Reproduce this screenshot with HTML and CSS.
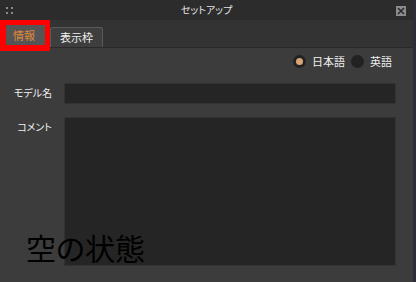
FILE: index.html
```html
<!DOCTYPE html>
<html lang="ja">
<head>
<meta charset="utf-8">
<link rel="stylesheet" href="styles.css">
</head>
<body>
<div class="window">
  <div class="titlebar">
    <span class="grip"><i></i><i></i><i></i><i></i></span>
    <span class="title">セットアップ</span>
    <span class="close"><svg width="8" height="8" viewBox="0 0 8 8"><path d="M1 1L7 7M7 1L1 7" stroke="#2a2a2a" stroke-width="1.6"/></svg></span>
  </div>
  <div class="tabbar">
    <div class="tab active">情報</div>
    <div class="tab">表示枠</div>
    <div class="highlight"></div>
  </div>
  <div class="content">
    <div class="langs">
      <span class="radio on"></span><span class="rlabel">日本語</span>
      <span class="radio"></span><span class="rlabel">英語</span>
    </div>
    <div class="row">
      <label class="lbl">モデル名</label>
      <div class="input"></div>
    </div>
    <div class="row tall">
      <label class="lbl">コメント</label>
      <div class="textarea"></div>
    </div>
    <div class="empty">空の状態</div>
  </div>
</div>
</body>
</html>
```
FILE: styles.css
```css
html, body { margin: 0; padding: 0; }
body {
  width: 416px; height: 282px; overflow: hidden;
  background: #3c3c3c;
  font-family: "Noto Sans CJK JP", "Noto Sans", sans-serif;
  font-feature-settings: "palt";
}
.window {
  width: 413px; height: 282px;
  border-right: 3px solid #2e2d35;
  background: #3c3c3c;
  display: flex; flex-direction: column;
  position: relative;
}
.titlebar {
  height: 20px; background: #2c2c2c;
  display: flex; align-items: center; justify-content: center;
  position: relative;
}
.title { color: #e6e6e6; font-size: 10px; line-height: 20px; }
.grip {
  position: absolute; left: 6px; top: 7px;
  width: 6px; height: 7px;
  display: grid; grid-template-columns: 2px 2px; column-gap: 3px; row-gap: 3px;
}
.grip i { display: block; width: 2px; height: 2px; background: #8a8a8a; }
.close {
  position: absolute; right: 7px; top: 6px;
  width: 10px; height: 10px; background: #8c8c8c;
  display: flex; align-items: center; justify-content: center;
}
.tabbar {
  height: 28px; background: #333333;
  display: flex; align-items: flex-end;
  padding-left: 6px;
  border-bottom: 1px solid #2a2a2a;
  box-sizing: border-box;
  position: relative;
}
.tab {
  height: 20px; box-sizing: border-box;
  padding: 0 9px;
  font-size: 11px; line-height: 19px; color: #f0f0f0;
  background: #3e3e3e;
  border: 1px solid #5a5a5a; border-bottom: none;
  border-radius: 3px 3px 0 0;
}
.tab.active {
  color: #e38a3a; background: #555555;
  border: none; border-radius: 0;
  width: 39px; padding: 0 0 0 7px; line-height: 20px;
  margin-right: 5px;
  margin-bottom: 2px;
}
.highlight {
  position: absolute; left: 0; top: 0;
  width: 50px; height: 31px; box-sizing: border-box;
  border: 6px solid #ff0000; border-right-width: 5px;
  border-top-width: 5px;
}
.content {
  flex: 1; display: flex; flex-direction: column;
  padding: 5px 17px 0 0;
  position: relative;
}
.langs {
  display: flex; align-items: center; justify-content: flex-end;
  height: 16px; font-size: 11px; color: #f0f0f0;
}
.radio {
  width: 13px; height: 13px; border-radius: 50%;
  background: #222; box-sizing: border-box;
  display: flex; align-items: center; justify-content: center;
  margin-right: 6px;
}
.radio.on::after {
  content: ""; width: 7px; height: 7px; border-radius: 50%; background: #d9a477;
}
.rlabel { margin-right: 6px; }
.rlabel:last-child { margin-right: 4px; }
.row { display: flex; margin-top: 14px; }
.row.tall { margin-top: 13px; }
.lbl {
  width: 52px; text-align: right; padding-right: 12px;
  font-size: 10px; color: #f0f0f0; line-height: 20px;
}
.input {
  flex: 1; height: 21px; box-sizing: border-box;
  background: #252525; border: 1px solid #333;
}
.textarea {
  flex: 1; height: 149px; box-sizing: border-box;
  background: #252525; border: 1px solid #333;
}
.empty {
  position: absolute; left: 26px; top: 181px;
  font-size: 30px; line-height: 37px; color: #000;
}
```
